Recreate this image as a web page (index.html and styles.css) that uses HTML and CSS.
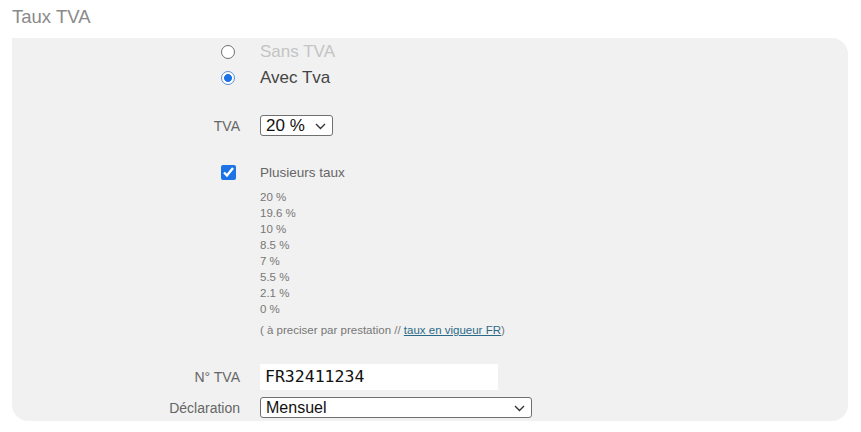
FILE: index.html
```html
<!DOCTYPE html>
<html lang="fr">
<head>
<meta charset="utf-8">
<title>Taux TVA</title>
<link rel="stylesheet" href="styles.css">
</head>
<body>
<h2 class="title">Taux TVA</h2>
<section class="panel">
  <div class="row row-radio">
    <div class="lab"><input type="radio" name="tva" class="radio"></div>
    <div class="field opt-off">Sans TVA</div>
  </div>
  <div class="row row-radio">
    <div class="lab"><input type="radio" name="tva" class="radio" checked></div>
    <div class="field opt-on">Avec Tva</div>
  </div>
  <div class="row row-tva">
    <div class="lab label">TVA</div>
    <div class="field">
      <div class="sel sel-small">
        <span class="sel-text">20 %</span>
        <svg class="chev" width="11" height="7" viewBox="0 0 11 7"><path d="M1 1l4.5 4.5L10 1" fill="none" stroke="#333" stroke-width="1.4"/></svg>
      </div>
    </div>
  </div>
  <div class="row row-check">
    <div class="lab"><input type="checkbox" class="check" checked></div>
    <div class="field label-plain">Plusieurs taux</div>
  </div>
  <div class="row row-list">
    <div class="lab"></div>
    <ul class="rates">
      <li>20 %</li>
      <li>19.6 %</li>
      <li>10 %</li>
      <li>8.5 %</li>
      <li>7 %</li>
      <li>5.5 %</li>
      <li>2.1 %</li>
      <li>0 %</li>
    </ul>
  </div>
  <div class="row row-note">
    <div class="lab"></div>
    <div class="note">( à preciser par prestation // <a href="#" class="link">taux en vigueur FR</a>)</div>
  </div>
  <div class="row row-num">
    <div class="lab label">N° TVA</div>
    <div class="field"><div class="inp">FR32411234</div></div>
  </div>
  <div class="row row-decl">
    <div class="lab label">Déclaration</div>
    <div class="field">
      <div class="sel sel-wide">
        <span class="sel-text sel-text-s">Mensuel</span>
        <svg class="chev" width="11" height="7" viewBox="0 0 11 7"><path d="M1 1l4.5 4.5L10 1" fill="none" stroke="#333" stroke-width="1.4"/></svg>
      </div>
    </div>
  </div>
</section>
</body>
</html>
```
FILE: styles.css
```css
* { box-sizing: border-box; }
html, body { margin: 0; padding: 0; background: #fff; }
body {
  font-family: "Liberation Sans", Arial, sans-serif;
  padding: 0 13px 0 12px;
}
.title {
  margin: 6px 0 0 0;
  font-size: 18.5px;
  line-height: 22px;
  font-weight: normal;
  color: #8a8a8a;
}
.panel {
  margin-top: 10px;
  background: #f1f1f1;
  border-radius: 0 16px 16px 16px;
  padding: 1px 0 3px 0;
  height: 383px;
}
.row {
  display: grid;
  grid-template-columns: 228px 1fr;
  column-gap: 20px;
  align-items: center;
}
.lab {
  display: flex;
  justify-content: flex-end;
  align-items: center;
}
.label {
  font-size: 14px;
  color: #666;
}
.row-radio { height: 26px; }
.radio {
  appearance: none;
  -webkit-appearance: none;
  width: 14px;
  height: 14px;
  margin: 0 5px 0 0;
  border: 1px solid #6f6f6f;
  border-radius: 50%;
  background: #fff;
}
.radio:checked {
  border-color: #5a8ed4;
  background: radial-gradient(circle, #1b73e6 0 3.6px, #fff 4.3px);
}
.opt-off { font-size: 17px; color: #c4c4c4; }
.opt-on { font-size: 17px; color: #444; }
.row-tva { margin-top: 24px; height: 21px; }
.sel {
  position: relative;
  height: 21px;
  background: #fff;
  border: 1px solid #707070;
  border-radius: 3px;
  display: flex;
  align-items: center;
  padding-left: 5px;
}
.sel-small { width: 73px; }
.sel-wide { width: 272px; }
.sel-text { font-size: 17px; color: #111; }
.sel-text-s { font-size: 16px; }
.chev { position: absolute; right: 6px; top: 7px; }
.row-check { margin-top: 26px; height: 20px; }
.check {
  width: 15px;
  height: 15px;
  margin: 0 4px 0 0;
  accent-color: #1b73e6;
}
.label-plain { font-size: 13.5px; color: #666; }
.row-list { margin-top: 7px; }
.rates {
  list-style: none;
  margin: 0;
  padding: 0;
  font-size: 11.5px;
  line-height: 16px;
  color: #777;
}
.row-note { margin-top: 5px; }
.note {
  font-size: 11.5px;
  line-height: 16px;
  color: #777;
}
.link { color: #2b6a87; text-decoration: underline; }
.row-num { margin-top: 26px; height: 26px; }
.inp {
  width: 238px;
  height: 26px;
  background: #fff;
  font-family: "DejaVu Sans Mono", monospace;
  font-size: 16.5px;
  color: #111;
  line-height: 26px;
  padding-left: 5px;
}
.row-decl { margin-top: 7px; height: 21px; }
```
